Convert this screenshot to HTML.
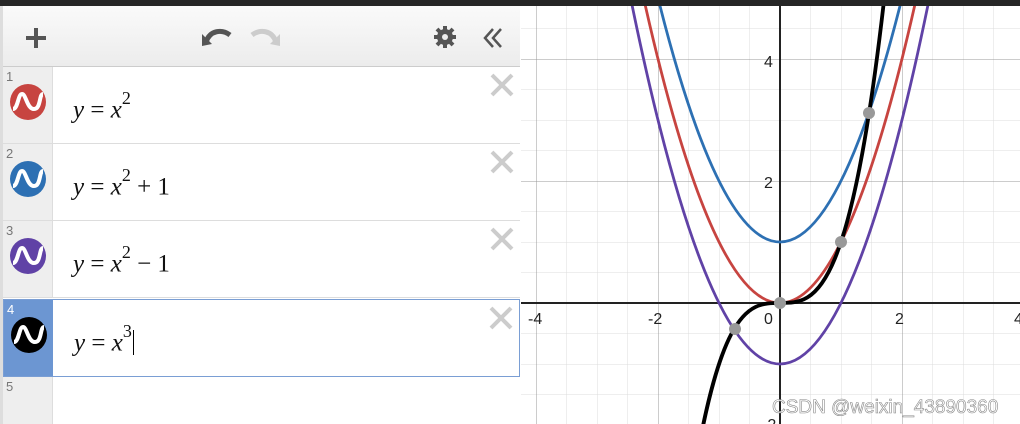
<!DOCTYPE html>
<html><head><style>
html,body{margin:0;width:1020px;height:424px;overflow:hidden;background:#fff;font-family:"Liberation Sans",sans-serif;position:relative}
.top{position:absolute;left:0;top:0;width:1020px;height:6px;background:#262626}
.panel{position:absolute;left:0;top:6px;width:520px;height:418px;border-left:3px solid #ddd;box-sizing:border-box;background:#fff;overflow:hidden}
.tb{position:absolute;left:0;top:0;width:517px;height:60px;background:linear-gradient(#fafafa,#ececec);border-bottom:1px solid #ccc}
.row{position:absolute;left:0;width:517px;height:77px;border-bottom:1px solid #ddd;box-sizing:border-box}
.num{position:absolute;left:0;top:0;width:49px;height:100%;background:#eee;border-right:1px solid #ddd;font-size:13px;color:#777}
.num span{position:absolute;left:3px;top:2px}
.ic{position:absolute;left:7px;top:17px}
.x{position:absolute;right:6px;top:6px}
.m{position:absolute;left:70px;top:25px;font-family:"Liberation Serif",serif;font-size:25px;color:#111}
.m i{font-style:italic}
.m sup{font-size:18px;position:relative;top:-4px}
</style></head><body>
<div class="top"></div>
<div class="panel">
<div class="tb">
<svg width="517" height="60" style="position:absolute;left:0;top:0">
<path d="M33 22v20M23 32h20" stroke="#555" stroke-width="4"/>
<path d="M203 36c4-12 16-13 24-7" fill="none" stroke="#555" stroke-width="5"/><path d="M199 28l10 10l-10 2z" fill="#555"/>
<path d="M273 36c-4-12-16-13-24-7" fill="none" stroke="#ccc" stroke-width="5"/><path d="M277 28l-10 10l10 2z" fill="#ccc"/>
<g transform="translate(442,31)" fill="#555"><circle r="8"/><g stroke="#555" stroke-width="4"><path d="M0-11v22M-11 0h22M-8-8l16 16M8-8l-16 16"/></g><circle r="3" fill="#eee"/></g>
<path d="M490 23l-8 9l8 9M498 23l-8 9l8 9" fill="none" stroke="#555" stroke-width="2.5"/>
</svg></div>
<div class="row" style="top:61px"><div class="num"><span>1</span><svg class="ic" width="36" height="36"><circle cx="18" cy="18" r="18" fill="#c74440"/><path d="M3 25c5 0 5-15 9-15s5 15 12 15s5-15 9-15" fill="none" stroke="#fff" stroke-width="4"/></svg></div><div class="m"><i>y</i> = <i>x</i><sup>2</sup></div><svg class="x" width="24" height="24"><path d="M2 2l20 20M22 2L2 22" stroke="#ccc" stroke-width="4"/></svg></div>
<div class="row" style="top:138px"><div class="num"><span>2</span><svg class="ic" width="36" height="36"><circle cx="18" cy="18" r="18" fill="#2d70b3"/><path d="M3 25c5 0 5-15 9-15s5 15 12 15s5-15 9-15" fill="none" stroke="#fff" stroke-width="4"/></svg></div><div class="m"><i>y</i> = <i>x</i><sup>2</sup> + 1</div><svg class="x" width="24" height="24"><path d="M2 2l20 20M22 2L2 22" stroke="#ccc" stroke-width="4"/></svg></div>
<div class="row" style="top:215px"><div class="num"><span>3</span><svg class="ic" width="36" height="36"><circle cx="18" cy="18" r="18" fill="#6042a6"/><path d="M3 25c5 0 5-15 9-15s5 15 12 15s5-15 9-15" fill="none" stroke="#fff" stroke-width="4"/></svg></div><div class="m"><i>y</i> = <i>x</i><sup>2</sup> − 1</div><svg class="x" width="24" height="24"><path d="M2 2l20 20M22 2L2 22" stroke="#ccc" stroke-width="4"/></svg></div>
<div class="row" style="top:293px;border:1px solid #7a9ed4;height:78px"><div class="num" style="background:#6c96d2;border-right:none"><span style="color:#fff">4</span><svg class="ic" width="36" height="36"><circle cx="18" cy="18" r="18" fill="#000"/><path d="M3 25c5 0 5-15 9-15s5 15 12 15s5-15 9-15" fill="none" stroke="#fff" stroke-width="4"/></svg></div><div class="m"><i>y</i> = <i>x</i><sup>3</sup><span style="border-left:1px solid #000;margin-left:1px;font-size:22px"> </span></div><svg class="x" width="24" height="24"><path d="M2 2l20 20M22 2L2 22" stroke="#ccc" stroke-width="4"/></svg></div>
<div class="row" style="top:371px;height:47px;border:none"><div class="num"><span>5</span></div></div>
</div>
<svg style="position:absolute;left:0;top:0" width="1020" height="424">
<defs><clipPath id="c"><rect x="521" y="6" width="499" height="418"/></clipPath>
<pattern id="mn" x="780" y="303" width="30.5" height="30.5" patternUnits="userSpaceOnUse"><path d="M0 0V30.5M0 0H30.5" stroke="#dcdcdc" stroke-width="1"/></pattern>
<pattern id="mj" x="780" y="303" width="122" height="122" patternUnits="userSpaceOnUse"><path d="M0 0V122M0 0H122" stroke="#999" stroke-width="1"/></pattern></defs>
<g clip-path="url(#c)">
<rect x="521" y="6" width="499" height="418" fill="url(#mn)"/>
<rect x="521" y="6" width="499" height="418" fill="url(#mj)"/>
<path d="M521 303H1020M780 6V424" stroke="#222" stroke-width="2"/>
<path d="M621.4 -109.4Q780 715.4 938.6 -109.4" fill="none" stroke="#c74440" stroke-width="2.8"/>
<path d="M621.4 -170.4Q780 654.4 938.6 -170.4" fill="none" stroke="#2d70b3" stroke-width="2.8"/>
<path d="M621.4 -48.4Q780 776.4 938.6 -48.4" fill="none" stroke="#6042a6" stroke-width="2.8"/>
<path d="M682.4 552.9C751.5 21.9 820.7 619.2 889.8 -52.8" fill="none" stroke="#000" stroke-width="3.8"/>
<g fill="#999"><circle cx="780" cy="303" r="6"/><circle cx="841" cy="242" r="6"/><circle cx="869" cy="113" r="6"/><circle cx="735" cy="329" r="6"/></g>
<g font-size="16" fill="#222" font-family="Liberation Sans"><text x="528" y="324">-4</text><text x="648" y="324">-2</text><text x="764" y="324">0</text><text x="895" y="324">2</text><text x="1014" y="324">4</text><text x="764" y="67">4</text><text x="764" y="188">2</text><text x="762" y="430">-2</text></g>
<text x="772" y="413" font-size="19" fill="#fff" fill-opacity="0.85" stroke="#888" stroke-width="0.6" font-family="Liberation Sans">CSDN @weixin_43890360</text>
</g></svg>
</body></html>
